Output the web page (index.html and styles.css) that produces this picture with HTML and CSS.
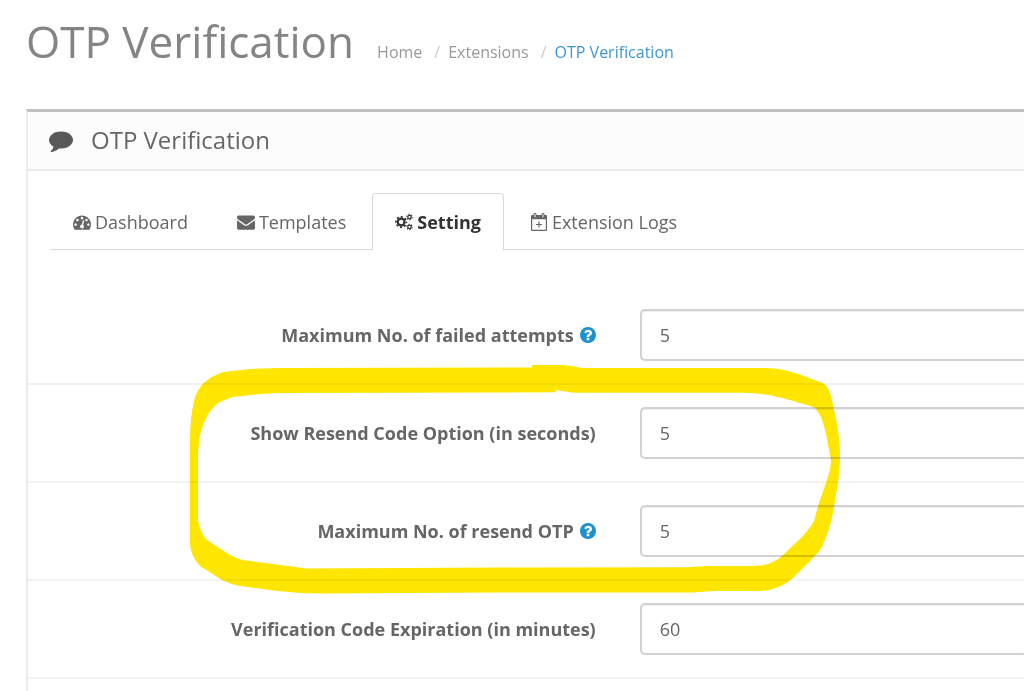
FILE: index.html
```html
<!DOCTYPE html>
<html lang="en">
<head>
    <meta charset="UTF-8">
    <meta name="viewport" content="width=device-width, initial-scale=1.0">
    <title>OTP Verification</title>
    <link rel="stylesheet" href="styles.css">
</head>
<body>
    <div class="page-header">
        <h1>OTP Verification</h1>
        <ul class="breadcrumb">
            <li><a href="#">Home</a></li>
            <li><a href="#">Extensions</a></li>
            <li><a href="#" class="current">OTP Verification</a></li>
        </ul>
    </div>

    <div class="panel">
        <div class="panel-heading">
            <svg class="icon-comment" viewBox="0 0 1792 1792"><path d="M1792 896q0 174-120 321.500t-326 233-450 85.500q-70 0-145-8-198 175-460 242-49 14-114 22-17 2-30.500-9t-17.500-29v-1q-3-4-.5-12t2-10 4.500-9.500l6-9 7-8.500 8-9q7-8 31-34.500t34.500-38 31-39.500 32.500-51 27-59 26-76q-157-89-247.500-220t-90.500-281q0-130 71-248.500t191-204.500 286-136.500 348-50.500q244 0 450 85.500t326 233 120 321.500z"/></svg>
            <h3>OTP Verification</h3>
        </div>

        <div class="panel-body">
            <ul class="nav-tabs">
                <li><a href="#">
                    <svg class="icon" viewBox="0 0 1792 1792"><path d="M384 1152q0-53-37.500-90.500t-90.500-37.500-90.500 37.500-37.500 90.500 37.500 90.500 90.500 37.500 90.500-37.500 37.500-90.500zm192-448q0-53-37.500-90.500t-90.500-37.500-90.500 37.500-37.500 90.500 37.500 90.500 90.500 37.500 90.500-37.500 37.500-90.500zm428 481l101-382q6-26-7.500-48.500t-38.500-29.500-48 6.500-30 39.500l-101 382q-60 5-107 43.500t-63 98.500q-20 77 20 146t117 89 146-20 89-117q16-60-6-117t-72-91zm660-33q0-53-37.500-90.500t-90.500-37.500-90.500 37.500-37.500 90.500 37.500 90.500 90.500 37.500 90.500-37.500 37.500-90.500zm-640-640q0-53-37.500-90.500t-90.500-37.500-90.500 37.500-37.500 90.500 37.500 90.500 90.500 37.500 90.500-37.500 37.500-90.500zm448 192q0-53-37.500-90.500t-90.500-37.500-90.500 37.500-37.500 90.500 37.500 90.500 90.500 37.500 90.500-37.500 37.500-90.500zm320 448q0 261-141 483-19 29-54 29h-1402q-35 0-54-29-141-221-141-483 0-182 71-348t191-286 286-191 348-71 348 71 286 191 191 286 71 348z"/></svg>
                    <span>Dashboard</span>
                </a></li>
                <li><a href="#">
                    <svg class="icon" viewBox="0 0 1792 1792"><path d="M1792 710v794q0 66-47 113t-113 47h-1472q-66 0-113-47t-47-113v-794q44 49 101 87 362 246 497 345 57 42 92.500 65.500t94.500 48 110 24.500h2q51 0 110-24.500t94.500-48 92.500-65.500q170-123 498-345 57-39 100-87zm0-294q0 79-49 151t-122 123q-376 261-468 325-10 7-42.500 30.500t-54 38-52 32.500-57.500 27-50 9h-2q-23 0-50-9t-57.500-27-52-32.500-54-38-42.500-30.500q-91-64-262-182.500t-205-142.500q-62-42-117-115.500t-55-136.500q0-78 41.500-130t118.500-52h1472q65 0 112.500 47t47.500 113z"/></svg>
                    <span>Templates</span>
                </a></li>
                <li class="active"><a href="#">
                    <svg class="icon icon-cogs" viewBox="0 0 19 18">
                        <g fill="none" stroke="currentColor">
                            <circle cx="6.500" cy="9" r="3.600" stroke-width="2.400"/>
                            <circle cx="6.500" cy="9" r="5.500" stroke-width="1.800" stroke-dasharray="2.160 2.160" stroke-dashoffset="1.080"/>
                            <circle cx="15.300" cy="3.800" r="1.800" stroke-width="1.300"/>
                            <circle cx="15.300" cy="3.800" r="2.900" stroke-width="1.100" stroke-dasharray="1.500 1.537"/>
                            <circle cx="15.300" cy="14.200" r="1.800" stroke-width="1.300"/>
                            <circle cx="15.300" cy="14.200" r="2.900" stroke-width="1.100" stroke-dasharray="1.500 1.537"/>
                        </g>
                    </svg>
                    <span>Setting</span>
                </a></li>
                <li><a href="#">
                    <svg class="icon icon-calendar" viewBox="0 0 18 18">
                        <path fill-rule="evenodd" d="M2 2h1.500V1.200q0-1.200 1.500-1.200t1.500 1.200V2h5V1.200q0-1.200 1.500-1.200t1.500 1.200V2H16q1 0 1 1v14q0 1-1 1H2q-1 0-1-1V3q0-1 1-1zM2.200 6.200v10.600h13.600V6.200zM4.500 1.200v3h1v-3zM12.500 1.200v3h1v-3z"/>
                        <path d="M8.400 8.500h1.200v2.400H12v1.200H9.600v2.400H8.400v-2.400H6v-1.200h2.400z"/>
                    </svg>
                    <span>Extension Logs</span>
                </a></li>
            </ul>

            <form class="settings">
                <div class="form-group">
                    <label for="max-failed">Maximum No. of failed attempts
                        <svg class="icon-help" viewBox="128 128 1536 1536"><path d="M1024 1376v-192q0-14-9-23t-23-9h-192q-14 0-23 9t-9 23v192q0 14 9 23t23 9h192q14 0 23-9t9-23zm256-672q0-88-55.500-163t-138.500-116-170-41q-243 0-371 213-15 24 8 42l132 100q7 6 19 6 16 0 25-12 53-68 86-92 34-24 86-24 48 0 85.500 26t37.500 59q0 38-20 61t-68 45q-63 28-115.500 86.500t-52.500 125.500v36q0 14 9 23t23 9h192q14 0 23-9t9-23q0-19 21.500-49.500t54.500-49.500q32-18 49-28.500t46-35 44.500-48 28-60.500 12.500-81zm384 192q0 209-103 385.500t-279.500 279.500-385.500 103-385.500-103-279.500-279.500-103-385.500 103-385.500 279.500-279.500 385.500-103 385.500 103 279.500 279.500 103 385.500z"/></svg>
                    </label>
                    <input type="text" id="max-failed" value="5">
                </div>
                <div class="form-group">
                    <label for="resend-time">Show Resend Code Option (in seconds)</label>
                    <input type="text" id="resend-time" value="5">
                </div>
                <div class="form-group">
                    <label for="max-resend">Maximum No. of resend OTP
                        <svg class="icon-help" viewBox="128 128 1536 1536"><path d="M1024 1376v-192q0-14-9-23t-23-9h-192q-14 0-23 9t-9 23v192q0 14 9 23t23 9h192q14 0 23-9t9-23zm256-672q0-88-55.500-163t-138.500-116-170-41q-243 0-371 213-15 24 8 42l132 100q7 6 19 6 16 0 25-12 53-68 86-92 34-24 86-24 48 0 85.500 26t37.500 59q0 38-20 61t-68 45q-63 28-115.500 86.500t-52.500 125.500v36q0 14 9 23t23 9h192q14 0 23-9t9-23q0-19 21.500-49.500t54.500-49.500q32-18 49-28.500t46-35 44.500-48 28-60.500 12.500-81zm384 192q0 209-103 385.500t-279.500 279.500-385.500 103-385.500-103-279.500-279.500-103-385.500 103-385.500 279.500-279.500 385.500-103 385.500 103 279.500 279.500 103 385.500z"/></svg>
                    </label>
                    <input type="text" id="max-resend" value="5">
                </div>
                <div class="form-group">
                    <label for="expiration">Verification Code Expiration (in minutes)</label>
                    <input type="text" id="expiration" value="60">
                </div>
                <div class="form-group"></div>
            </form>
        </div>
    </div>

    <!-- highlighter mark round the resend options -->
    <svg class="marker" viewBox="190 364 650 230">
        <path fill-rule="evenodd" d="M532 365L564 365Q572 366 582 368L765 368C784 368 799 374 817 381C826 383 830 388 833 405Q840 434 840 455Q840 470 838 483L833 513Q829 532 822 547Q819 552 813 558L793 578Q780 590 760 591L713 591L693 592.500L500 592.500L320 593.500C285 593.500 265 589 240 586Q230 584 222 580L200 566Q190 555 190 543L190 440Q190 415 195 397Q199 387 205 382Q212 376 223 372L250 369L280 368L532 367.500Z
        M280 393L556 392.300L556 390L573 392.700L743 392.700C765 393 780 397 803 404Q812 406 815 408Q822 415 826 434L831 460Q831 468 827 480L819 503L814 521Q811 527 802 537L783 555Q772 566 753 566L707 566L687 567.300L500 567.500L307 568.500L243 560Q234 558 227 553L207 540Q200 532 198 520L198 460Q198 440 202 428Q207 412 218 403L232 397L260 394Z"/>
    </svg>
</body>
</html>
```
FILE: styles.css
```css
* {
    box-sizing: border-box;
}
body {
    position: relative;
    margin: 0;
    padding: 9px 0 0 26px;
    overflow-x: hidden;
    background-color: #fff;
    color: #666;
    font-family: "Open Sans", sans-serif;
    font-size: 18px;
    line-height: 26px;
}
a {
    color: inherit;
    text-decoration: none;
}
ul {
    margin: 0;
    padding: 0;
    list-style: none;
}
svg {
    fill: currentColor;
}

/* header */
.page-header {
    display: flex;
    align-items: baseline;
    gap: 23px;
    margin-bottom: 36px;
}
.page-header h1 {
    margin: 0;
    color: #848484;
    font-size: 44px;
    font-weight: 400;
    line-height: 64px;
}
.breadcrumb {
    display: flex;
    color: #999;
    font-size: 16px;
}
.breadcrumb li + li::before {
    content: "/";
    padding: 0 8px 0 12px;
    color: #ccc;
}
.breadcrumb .current {
    color: #3c97d3;
}

/* panel */
.panel {
    border-top: 3px solid #bfbfbf;
    border-left: 2px solid #ebebeb;
}
.panel-heading {
    display: flex;
    align-items: center;
    gap: 18px;
    height: 59px;
    padding: 0 0 2px 21px;
    border-bottom: 2px solid #ebebeb;
    background-color: #fcfcfc;
}
.panel-heading h3 {
    margin: 0;
    font-size: 24px;
    font-weight: 400;
}
.icon-comment {
    width: 24px;
    height: 24px;
    color: #595959;
}

/* tabs */
.nav-tabs {
    display: flex;
    gap: 3px;
    margin: 22px 0 0 22px;
    border-bottom: 1px solid #d8d8d8;
}
.nav-tabs li {
    margin-bottom: -1px;
}
.nav-tabs a {
    display: flex;
    align-items: center;
    gap: 4px;
    height: 57px;
    padding: 0 22px;
    border: 1px solid transparent;
    border-bottom: 0;
    border-radius: 4px 4px 0 0;
}
.nav-tabs .active a {
    border-color: #d8d8d8;
    background-color: #fff;
    color: #333;
    font-weight: 700;
}
.icon {
    width: 18px;
    height: 18px;
}

/* form */
.settings {
    padding-top: 37px;
}
.form-group {
    display: grid;
    grid-template-columns: 57% 1fr;
    column-gap: 44px;
    align-items: center;
    padding: 22px 0;
}
.form-group + .form-group {
    border-top: 2px solid #f2f2f2;
}
.form-group label {
    display: flex;
    align-items: center;
    justify-content: flex-end;
    gap: 6px;
    font-weight: 700;
}
.form-group input {
    width: 100%;
    height: 52px;
    padding: 0 18px;
    border: 2px solid #d2d2d2;
    border-right: 0;
    border-radius: 5px 0 0 5px;
    background-color: #fff;
    box-shadow: inset 0 1px 1px rgba(0, 0, 0, 0.07);
    color: #666;
    font: inherit;
}
.icon-help {
    width: 16px;
    height: 16px;
    color: #1e91cf;
}

.marker {
    position: absolute;
    top: 364px;
    left: 190px;
    width: 650px;
    height: 230px;
    color: #ffe600;
    mix-blend-mode: multiply;
    pointer-events: none;
}
```
